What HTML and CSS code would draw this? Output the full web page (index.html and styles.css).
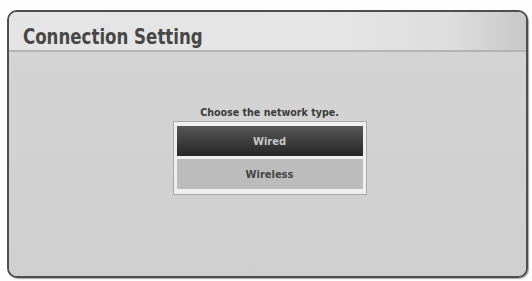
FILE: index.html
```html
<!DOCTYPE html>
<html>
<head>
<meta charset="utf-8">
<link rel="stylesheet" href="styles.css">
</head>
<body>
<div class="screen">
  <div class="panel">
    <div class="header">
      <h1 class="title">Connection Setting</h1>
    </div>
    <div class="content">
      <p class="prompt">Choose the network type.</p>
      <div class="menu">
        <div class="item selected">Wired</div>
        <div class="item">Wireless</div>
      </div>
    </div>
  </div>
</div>
</body>
</html>
```
FILE: styles.css
```css
html, body {
  margin: 0;
  padding: 0;
  background: #fdfdfd;
}
.screen {
  width: 532px;
  height: 281px;
  box-sizing: border-box;
  padding: 10px 4px 3px 7px;
}
.panel {
  height: 100%;
  box-sizing: border-box;
  border: 2px solid #4e4e4e;
  border-radius: 10px;
  background: #d0d0d0;
  overflow: hidden;
  display: flex;
  flex-direction: column;
  box-shadow: 1px 1px 1px rgba(0,0,0,0.35);
}
.header {
  height: 40px;
  box-sizing: border-box;
  background: linear-gradient(to right, #e4e4e4 0%, #e6e6e6 60%, #dedede 85%, #c8c8c8 100%);
  border-bottom: 2px solid #b4b4b4;
  box-shadow: 0 1px 0 #e6e6e6;
  padding: 12px 0 0 14px;
}
.title {
  margin: 0;
  font-family: "DejaVu Sans Condensed", "DejaVu Sans", sans-serif;
  font-weight: bold;
  font-size: 22px;
  line-height: 26px;
  color: #474747;
  transform: scaleX(0.84);
  transform-origin: left center;
  white-space: nowrap;
}
.content {
  flex: 1;
  display: flex;
  flex-direction: column;
  align-items: center;
  padding-top: 54px;
  padding-left: 4px;
  background: linear-gradient(to bottom, #d4d4d4, #cfcfcf);
}
.prompt {
  margin: 0 0 3px 0;
  font-family: "DejaVu Sans Condensed", "DejaVu Sans", sans-serif;
  font-weight: bold;
  font-size: 10.6px;
  line-height: 12px;
  color: #3a3a3a;
}
.menu {
  width: 194px;
  box-sizing: border-box;
  border: 1px solid #a8a8a8;
  background: #efefef;
  padding: 4px 3px 5px 3px;
  display: flex;
  flex-direction: column;
  gap: 3px;
}
.item {
  height: 30px;
  display: flex;
  align-items: center;
  justify-content: center;
  background: #bcbcbc;
  font-family: "DejaVu Sans Condensed", "DejaVu Sans", sans-serif;
  font-weight: bold;
  font-size: 11px;
  color: #444;
}
.item.selected {
  background: linear-gradient(to bottom, #575757 0%, #3c3c3c 55%, #262626 100%);
  color: #c8c8c8;
}
```
